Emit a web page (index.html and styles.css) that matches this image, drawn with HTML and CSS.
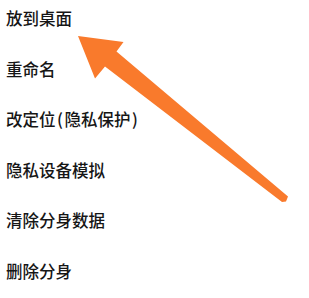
FILE: index.html
```html
<!DOCTYPE html>
<html lang="zh-CN">
<head>
<meta charset="utf-8">
<link rel="stylesheet" href="styles.css">
</head>
<body>
<div class="page">
  <ul class="menu">
    <li class="item">放到桌面</li>
    <li class="item">重命名</li>
    <li class="item">改定位<span class="paren">(</span>隐私保护<span class="paren">)</span></li>
    <li class="item">隐私设备模拟</li>
    <li class="item">清除分身数据</li>
    <li class="item">删除分身</li>
  </ul>
  <svg class="arrow" width="309" height="298" viewBox="0 0 309 298">
    <polygon fill="#f97a2c" points="78,36 123.5,42 116.5,51.5 288,196.5 286,201.5 282,202 105,66.5 95,78.5"/>
  </svg>
</div>
</body>
</html>
```
FILE: styles.css
```css
html, body {
  margin: 0;
  padding: 0;
  background: #ffffff;
}
.page {
  position: relative;
  width: 309px;
  height: 298px;
  overflow: hidden;
}
.menu {
  list-style: none;
  margin: 0;
  padding: 8px 0 0 6px;
  display: flex;
  flex-direction: column;
  gap: 30.6px;
}
.item {
  font-family: "Noto Sans CJK SC", "Noto Sans", sans-serif;
  font-size: 16.5px;
  font-weight: 500;
  line-height: 20px;
  height: 20px;
  color: #161616;
  white-space: nowrap;
}
.paren {
  padding: 0 1.5px;
}
.arrow {
  position: absolute;
  left: 0;
  top: 0;
}
```
